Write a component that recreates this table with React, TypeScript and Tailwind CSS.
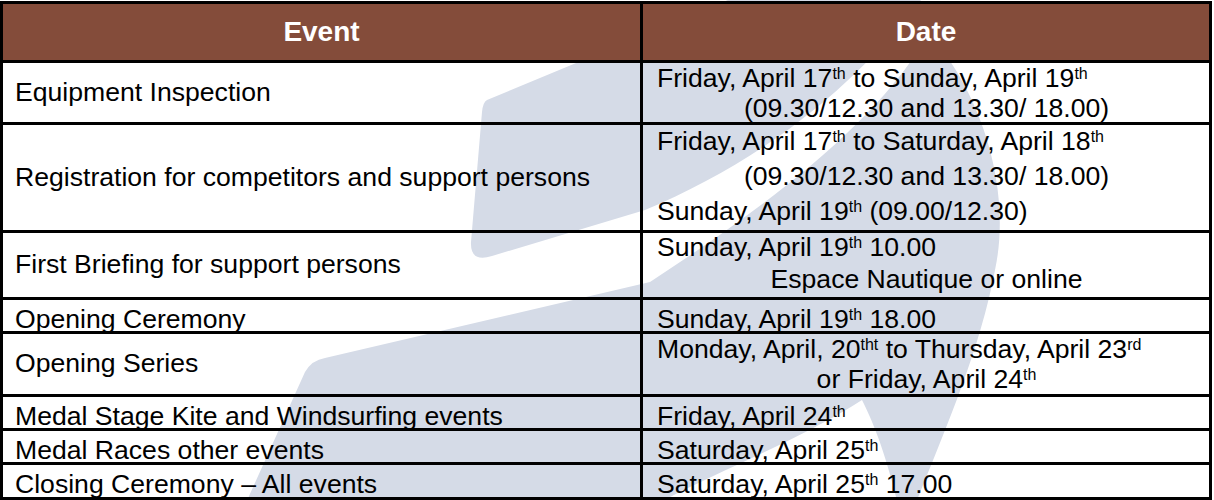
import * as React from "react";

const font = "font-['Liberation_Sans',Arial,Helvetica,sans-serif]";

function Sup({ children }: { children: React.ReactNode }) {
  return <sup className="relative -top-[8px] align-baseline text-[16px] leading-none">{children}</sup>;
}

function Watermark() {
  return (
    <svg className="absolute left-0 top-0" width="1214" height="500" viewBox="0 0 1214 500" fill="#d5dbe7">
      {/* upper block */}
      <path d="M487 100 L740 -5 L925 -5 L905 20 C830 110 740 170 645 210 L492 256 Q470 263 471 242 L482 112 Q483 102 487 100 Z" />
      {/* lower swoosh + sail */}
      <path d="M245 505 L305 372 Q312 360 325 358 L650 282 C760 210 870 130 925 40 L935 40 C990 110 1010 200 995 270 C980 350 945 430 915 505 L898 505 C885 450 872 420 862 400 C800 440 720 470 655 505 Z" />
    </svg>
  );
}

function Row({
  event,
  h,
  last,
  children,
}: {
  event: string;
  h: string;
  last?: boolean;
  children: React.ReactNode;
}) {
  return (
    <div className={`grid grid-cols-[640px_1fr] ${h} ${last ? "" : "border-b-[3px] border-black"}`}>
      <div className="flex items-center border-r-[3px] border-black pl-[12px]">{event}</div>
      <div className="pl-[14px] pr-[13px]">{children}</div>
    </div>
  );
}

function OneLine({ children }: { children: React.ReactNode }) {
  return (
    <div className="flex h-full items-center">
      <span>{children}</span>
    </div>
  );
}

export default function App() {
  return (
    <div className={`relative h-[500px] w-[1214px] overflow-hidden bg-white pt-px text-[26.6px] text-black ${font}`}>
      <Watermark />
      <div className="relative w-[1212px] border-[3px] border-black">
        <div className="grid h-[59px] grid-cols-[640px_1fr] border-b-[3px] border-black bg-[#844c3a] text-[28px] font-bold text-white">
          <div className="flex items-center justify-center border-r-[3px] border-black">Event</div>
          <div className="flex items-center justify-center">Date</div>
        </div>

        <Row event="Equipment Inspection" h="h-[62px]">
          <div className="leading-[30px]">
            Friday, April 17<Sup>th</Sup> to Sunday, April 19<Sup>th</Sup>
          </div>
          <div className="text-center leading-[30px]">(09.30/12.30 and 13.30/ 18.00)</div>
        </Row>

        <Row event="Registration for competitors and support persons" h="h-[108px]">
          <div className="flex h-[34px] items-center">
            <span>
              Friday, April 17<Sup>th</Sup> to Saturday, April 18<Sup>th</Sup>
            </span>
          </div>
          <div className="flex h-[36px] items-center justify-center">(09.30/12.30 and 13.30/ 18.00)</div>
          <div className="flex h-[33px] items-center">
            <span>
              Sunday, April 19<Sup>th</Sup> (09.00/12.30)
            </span>
          </div>
        </Row>

        <Row event="First Briefing for support persons" h="h-[67px]">
          <div className="flex h-[30px] items-center">
            <span>
              Sunday, April 19<Sup>th</Sup> 10.00
            </span>
          </div>
          <div className="flex h-[34px] items-center justify-center">Espace Nautique or online</div>
        </Row>

        <Row event="Opening Ceremony" h="h-[34px]">
          <OneLine>
            Sunday, April 19<Sup>th</Sup> 18.00
          </OneLine>
        </Row>

        <Row event="Opening Series" h="h-[63px]">
          <div className="leading-[30px]">
            <div>
              Monday, April, 20<Sup>tht</Sup> to Thursday, April 23<Sup>rd</Sup>
            </div>
            <div className="text-center">
              or Friday, April 24<Sup>th</Sup>
            </div>
          </div>
        </Row>

        <Row event="Medal Stage Kite and Windsurfing events" h="h-[34px]">
          <OneLine>
            Friday, April 24<Sup>th</Sup>
          </OneLine>
        </Row>

        <Row event="Medal Races other events" h="h-[34px]">
          <OneLine>
            Saturday, April 25<Sup>th</Sup>
          </OneLine>
        </Row>

        <Row event="Closing Ceremony – All events" h="h-[32px]" last>
          <OneLine>
            Saturday, April 25<Sup>th</Sup> 17.00
          </OneLine>
        </Row>
      </div>
    </div>
  );
}
